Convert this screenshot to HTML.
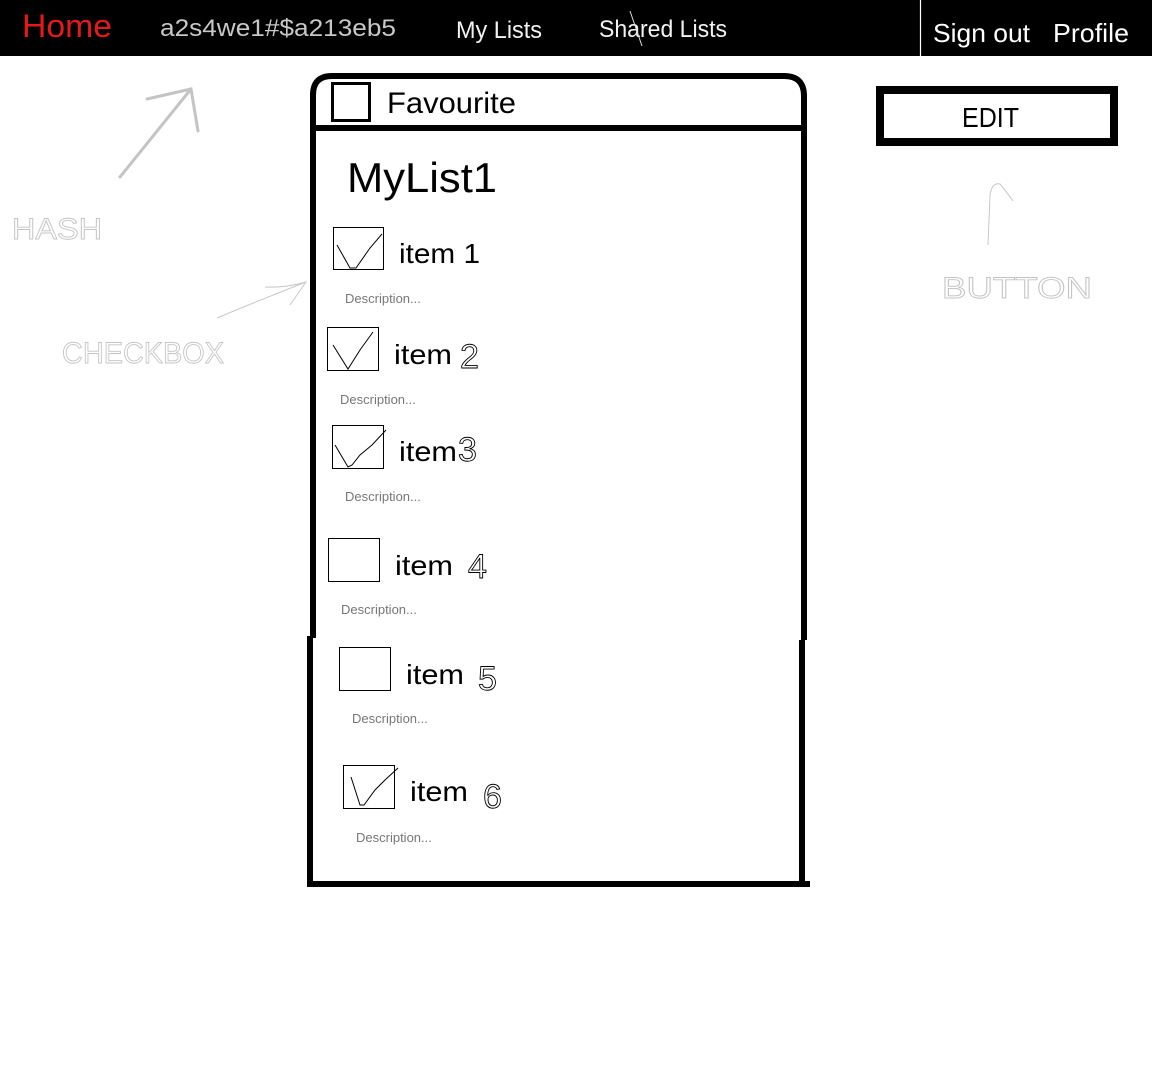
<!DOCTYPE html>
<html><head><meta charset="utf-8"><style>
html,body{margin:0;padding:0;background:#fff;width:1152px;height:1085px;overflow:hidden}
svg{display:block}
text{font-family:"Liberation Sans",sans-serif}
</style></head><body>
<svg width="1152" height="1085" viewBox="0 0 1152 1085" xmlns="http://www.w3.org/2000/svg">
<rect x="0" y="0" width="1152" height="56" fill="#000"/>
<line x1="920.5" y1="0" x2="920.5" y2="56" stroke="#fff" stroke-width="1.2"/>
<text x="22" y="37" font-size="32" fill="#e4191c" textLength="90" lengthAdjust="spacingAndGlyphs">Home</text>
<text x="160" y="36" font-size="24" fill="#c8c8c8" textLength="236" lengthAdjust="spacingAndGlyphs">a2s4we1#$a213eb5</text>
<text x="456" y="38" font-size="24" fill="#f2f2f2" textLength="86" lengthAdjust="spacingAndGlyphs">My Lists</text>
<text x="599" y="37" font-size="24" fill="#f2f2f2" textLength="128" lengthAdjust="spacingAndGlyphs">Shared Lists</text>
<line x1="630" y1="11" x2="642" y2="46" stroke="#ddd" stroke-width="1"/>
<text x="933" y="42" font-size="26" fill="#fff" textLength="97" lengthAdjust="spacingAndGlyphs">Sign out</text>
<text x="1053" y="42" font-size="26" fill="#fff" textLength="76" lengthAdjust="spacingAndGlyphs">Profile</text>

<!-- annotations -->
<g stroke="#c4c4c4" stroke-width="3" fill="none" stroke-linecap="round">
<path d="M120 177 L191 89 M147 99 L191 89 L198 131"/>
</g>
<g stroke="#c8c8c8" stroke-width="1" fill="none">
<path d="M217 318 Q260 300 306 282 M265 287 Q285 288 306 282 L290 305"/>
<path d="M988 245 L990 195 Q992 182 1000 184 Q1005 190 1013 201"/>
</g>
<text x="12" y="239" font-size="30" fill="none" stroke="#c4c4c4" stroke-width="0.9" textLength="90" lengthAdjust="spacingAndGlyphs">HASH</text>
<text x="62" y="363" font-size="30" fill="none" stroke="#c4c4c4" stroke-width="0.9" textLength="162" lengthAdjust="spacingAndGlyphs">CHECKBOX</text>
<text x="942" y="298" font-size="30" fill="none" stroke="#c4c4c4" stroke-width="0.9" textLength="150" lengthAdjust="spacingAndGlyphs">BUTTON</text>

<!-- EDIT -->
<rect x="880" y="90" width="234" height="52" fill="#fff" stroke="#000" stroke-width="8"/>
<text x="962" y="127" font-size="28" fill="#000" textLength="57" lengthAdjust="spacingAndGlyphs">EDIT</text>

<!-- card -->
<g stroke="#000" fill="none" stroke-width="6">
<path d="M313 638 L313 95 Q313 76 332 76 L784 76 Q804 76 804 96 L804 640"/>
<path d="M310 636 L310 884 L810 884 M802 640 L802 884"/>
<line x1="313" y1="128" x2="804" y2="128"/>
</g>
<rect x="332.5" y="83.5" width="37" height="37" fill="none" stroke="#000" stroke-width="3"/>
<text x="387" y="113" font-size="30" fill="#000" textLength="129" lengthAdjust="spacingAndGlyphs">Favourite</text>
<text x="347" y="192" font-size="42" fill="#000" textLength="150" lengthAdjust="spacingAndGlyphs">MyList1</text>

<g fill="none" stroke="#000" stroke-width="1">
<rect x="333.5" y="227.5" width="50" height="42"/>
<path d="M337 245 L350 268 L356 268 L370 248 L382 234"/>
<rect x="327.5" y="327.5" width="51" height="43"/>
<path d="M333 345 L348 369 L360 350 L373 332"/>
<rect x="332.5" y="425.5" width="51" height="43"/>
<path d="M335 445 L348 467 L352 465 L360 455 L372 445 L386 430"/>
<rect x="328.5" y="538.5" width="51" height="43"/>
<rect x="339.5" y="647.5" width="51" height="43"/>
<rect x="343.5" y="765.5" width="51" height="43"/>
<path d="M351 777 L360 805 L364 805 L375 790 L385 780 L398 768"/>
</g>
<g fill="#000" font-size="28">
<text x="399" y="263" textLength="81" lengthAdjust="spacingAndGlyphs">item 1</text>
<text x="394" y="364" textLength="58" lengthAdjust="spacingAndGlyphs">item</text>
<text x="399" y="461" textLength="58" lengthAdjust="spacingAndGlyphs">item</text>
<text x="395" y="575" textLength="58" lengthAdjust="spacingAndGlyphs">item</text>
<text x="406" y="684" textLength="58" lengthAdjust="spacingAndGlyphs">item</text>
<text x="410" y="801" textLength="58" lengthAdjust="spacingAndGlyphs">item</text>
</g>
<g fill="none" stroke="#000" stroke-width="0.9" font-size="34">
<text x="460" y="368">2</text>
<text x="458" y="461">3</text>
<text x="468" y="578">4</text>
<text x="478" y="690">5</text>
<text x="483" y="808">6</text>
</g>
<g fill="#777" font-size="13">
<text x="345" y="303">Description...</text>
<text x="340" y="404">Description...</text>
<text x="345" y="501">Description...</text>
<text x="341" y="614">Description...</text>
<text x="352" y="723">Description...</text>
<text x="356" y="842">Description...</text>
</g>
</svg>
</body></html>
